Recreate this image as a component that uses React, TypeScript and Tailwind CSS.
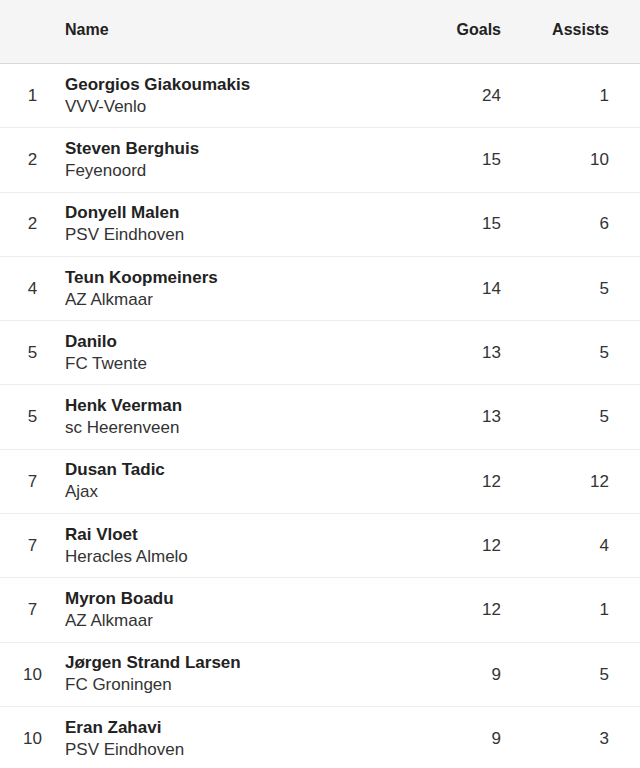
const players = [
  { rank: 1, name: 'Georgios Giakoumakis', team: 'VVV-Venlo', goals: 24, assists: 1 },
  { rank: 2, name: 'Steven Berghuis', team: 'Feyenoord', goals: 15, assists: 10 },
  { rank: 2, name: 'Donyell Malen', team: 'PSV Eindhoven', goals: 15, assists: 6 },
  { rank: 4, name: 'Teun Koopmeiners', team: 'AZ Alkmaar', goals: 14, assists: 5 },
  { rank: 5, name: 'Danilo', team: 'FC Twente', goals: 13, assists: 5 },
  { rank: 5, name: 'Henk Veerman', team: 'sc Heerenveen', goals: 13, assists: 5 },
  { rank: 7, name: 'Dusan Tadic', team: 'Ajax', goals: 12, assists: 12 },
  { rank: 7, name: 'Rai Vloet', team: 'Heracles Almelo', goals: 12, assists: 4 },
  { rank: 7, name: 'Myron Boadu', team: 'AZ Alkmaar', goals: 12, assists: 1 },
  { rank: 10, name: 'Jørgen Strand Larsen', team: 'FC Groningen', goals: 9, assists: 5 },
  { rank: 10, name: 'Eran Zahavi', team: 'PSV Eindhoven', goals: 9, assists: 3 },
];

export default function App() {
  return (
    <div className="w-[640px] h-[768px] overflow-hidden bg-white text-[#222] font-['Liberation_Sans',Arial,sans-serif]">
      {/* header */}
      <div className="grid grid-cols-[64px_1fr_80px_108px] pr-[31px] h-[64px] items-center bg-[#f5f5f5] border-b border-[#d8d8d8] text-[16px] font-bold text-[#222] pb-[3px]">
        <div />
        <div className="pl-px">Name</div>
        <div className="text-right">Goals</div>
        <div className="text-right">Assists</div>
      </div>

      {players.map((p, i) => (
        <div
          key={i}
          className="grid grid-cols-[64px_1fr_80px_108px] pr-[31px] h-[64.3px] items-center border-b border-[#ececec] text-[17px] text-[#333]"
        >
          <div className="text-center pl-px">{p.rank}</div>
          <div className="leading-[22px] pl-px">
            <div className="font-bold text-[#222]">{p.name}</div>
            <div>{p.team}</div>
          </div>
          <div className="text-right">{p.goals}</div>
          <div className="text-right">{p.assists}</div>
        </div>
      ))}
    </div>
  );
}
